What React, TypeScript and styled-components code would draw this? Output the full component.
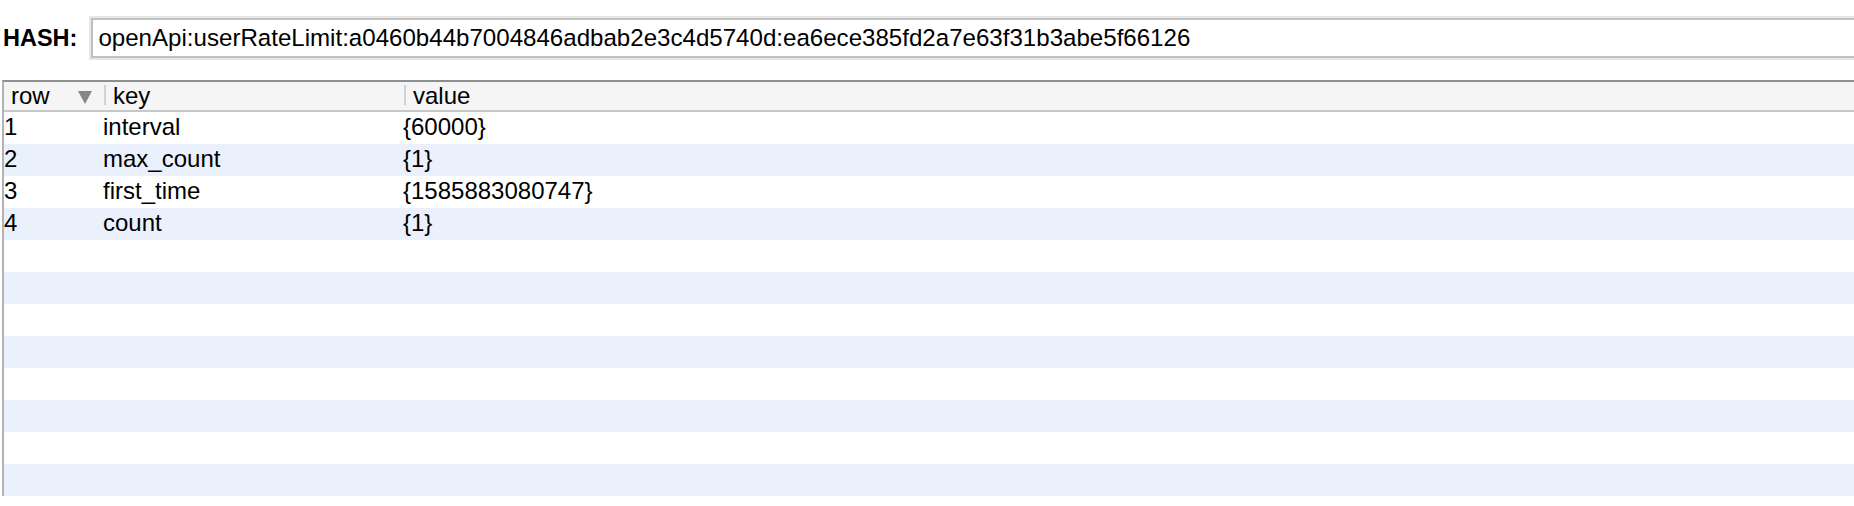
import React from "react";
import styled, { createGlobalStyle } from "styled-components";

const GlobalStyle = createGlobalStyle`
  html, body {
    margin: 0;
    padding: 0;
    background: #ffffff;
    overflow: hidden;
  }
  body {
    font-family: "Liberation Sans", Arial, Helvetica, sans-serif;
    color: #000;
  }
`;

const Page = styled.div`
  width: 1854px;
  height: 506px;
  overflow: hidden;
`;

const Toolbar = styled.div`
  display: flex;
  align-items: center;
  gap: 14px;
  padding: 18px 0 0 3px;
  height: 40px;
`;

const Label = styled.span`
  font-weight: 700;
  font-size: 23.5px;
  line-height: 40px;
`;

const KeyInput = styled.div`
  flex: 1;
  box-sizing: border-box;
  height: 40px;
  margin-right: -20px;
  border: 2px solid #c0c0c0;
  box-shadow: 0 0 0 2px #e6e6e6;
  padding: 0 5px;
  font-size: 24.1px;
  line-height: 36px;
  white-space: nowrap;
  overflow: hidden;
`;

const Table = styled.div`
  margin: 22px 0 0 2px;
  border-left: 2px solid #b2b2b2;
  border-top: 2px solid #8e8e8e;
`;

const cols = "99px 300px 1fr";

const HeaderRow = styled.div`
  display: grid;
  grid-template-columns: ${cols};
  height: 28px;
  background: #f5f5f5;
  border-bottom: 2px solid #c8c8c8;
`;

const HeaderCell = styled.div<{ $sep?: boolean }>`
  position: relative;
  display: flex;
  align-items: center;
  justify-content: space-between;
  font-size: 24px;
  line-height: 28px;
  padding-left: ${(p) => (p.$sep ? "10px" : "7px")};
  padding-right: 11px;
  white-space: nowrap;
  &::before {
    content: "";
    display: ${(p) => (p.$sep ? "block" : "none")};
    position: absolute;
    left: 1px;
    top: 3px;
    bottom: 5px;
    width: 2px;
    background: #d2d2d2;
  }
`;

const SortArrow = styled.span`
  width: 0;
  height: 0;
  border-left: 7px solid transparent;
  border-right: 7px solid transparent;
  border-top: 13px solid #878787;
  margin-top: 2px;
`;

const Row = styled.div<{ $alt: boolean }>`
  display: grid;
  grid-template-columns: ${cols};
  height: 32px;
  background: ${(p) => (p.$alt ? "#eaf1fd" : "#ffffff")};
`;

const Cell = styled.div`
  font-size: 24px;
  line-height: 30px;
  white-space: nowrap;
  overflow: hidden;
`;

const data: [string, string, string][] = [
  ["1", "interval", "{60000}"],
  ["2", "max_count", "{1}"],
  ["3", "first_time", "{1585883080747}"],
  ["4", "count", "{1}"],
];

const rows: [string, string, string][] = [
  ...data,
  ...Array.from({ length: 8 }, () => ["", "", ""] as [string, string, string]),
];

export default function App() {
  return (
    <Page>
      <GlobalStyle />
      <Toolbar>
        <Label>HASH:</Label>
        <KeyInput>
          openApi:userRateLimit:a0460b44b7004846adbab2e3c4d5740d:ea6ece385fd2a7e63f31b3abe5f66126
        </KeyInput>
      </Toolbar>
      <Table>
        <HeaderRow>
          <HeaderCell>
            row
            <SortArrow />
          </HeaderCell>
          <HeaderCell $sep>key</HeaderCell>
          <HeaderCell $sep>value</HeaderCell>
        </HeaderRow>
        {rows.map((r, i) => (
          <Row key={i} $alt={i % 2 === 1}>
            <Cell>{r[0]}</Cell>
            <Cell>{r[1]}</Cell>
            <Cell>{r[2]}</Cell>
          </Row>
        ))}
      </Table>
    </Page>
  );
}
